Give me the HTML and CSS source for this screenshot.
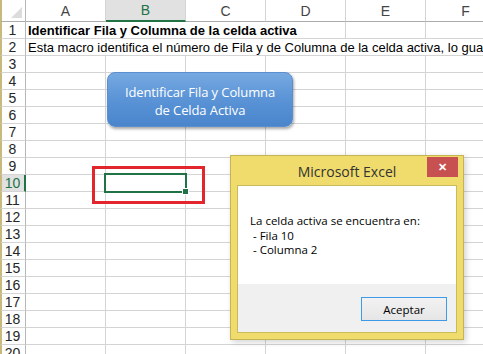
FILE: index.html
```html
<!DOCTYPE html>
<html lang="es">
<head>
  <meta charset="UTF-8">
  <title>Identificar Fila y Columna de la celda activa</title>
  <link rel="stylesheet" href="styles.css">
</head>
<body>
  <div class="app">
    <div class="sheet">
      <!-- cabecera de columnas -->
      <div class="corner"><span></span></div>
      <div class="col-head">A</div>
      <div class="col-head active">B</div>
      <div class="col-head">C</div>
      <div class="col-head">D</div>
      <div class="col-head">E</div>
      <div class="col-head">F</div>

      <div class="row-head">1</div>
      <div class="cell bold span4">Identificar Fila y Columna de la celda activa</div>
      <div class="cell"></div><div class="cell"></div>

      <div class="row-head">2</div>
      <div class="cell span6">Esta macro identifica el número de Fila y de Columna de la celda activa, lo guarda en variables y lo muestra</div>

      <div class="row-head">3</div>
      <div class="cell"></div><div class="cell"></div><div class="cell"></div><div class="cell"></div><div class="cell"></div><div class="cell"></div>
      <div class="row-head">4</div>
      <div class="cell"></div><div class="cell"></div><div class="cell"></div><div class="cell"></div><div class="cell"></div><div class="cell"></div>
      <div class="row-head">5</div>
      <div class="cell"></div><div class="cell"></div><div class="cell"></div><div class="cell"></div><div class="cell"></div><div class="cell"></div>
      <div class="row-head">6</div>
      <div class="cell"></div><div class="cell"></div><div class="cell"></div><div class="cell"></div><div class="cell"></div><div class="cell"></div>
      <div class="row-head">7</div>
      <div class="cell"></div><div class="cell"></div><div class="cell"></div><div class="cell"></div><div class="cell"></div><div class="cell"></div>
      <div class="row-head">8</div>
      <div class="cell"></div><div class="cell"></div><div class="cell"></div><div class="cell"></div><div class="cell"></div><div class="cell"></div>
      <div class="row-head">9</div>
      <div class="cell"></div><div class="cell"></div><div class="cell"></div><div class="cell"></div><div class="cell"></div><div class="cell"></div>
      <div class="row-head active">10</div>
      <div class="cell"></div><div class="cell"></div><div class="cell"></div><div class="cell"></div><div class="cell"></div><div class="cell"></div>
      <div class="row-head">11</div>
      <div class="cell"></div><div class="cell"></div><div class="cell"></div><div class="cell"></div><div class="cell"></div><div class="cell"></div>
      <div class="row-head">12</div>
      <div class="cell"></div><div class="cell"></div><div class="cell"></div><div class="cell"></div><div class="cell"></div><div class="cell"></div>
      <div class="row-head">13</div>
      <div class="cell"></div><div class="cell"></div><div class="cell"></div><div class="cell"></div><div class="cell"></div><div class="cell"></div>
      <div class="row-head">14</div>
      <div class="cell"></div><div class="cell"></div><div class="cell"></div><div class="cell"></div><div class="cell"></div><div class="cell"></div>
      <div class="row-head">15</div>
      <div class="cell"></div><div class="cell"></div><div class="cell"></div><div class="cell"></div><div class="cell"></div><div class="cell"></div>
      <div class="row-head">16</div>
      <div class="cell"></div><div class="cell"></div><div class="cell"></div><div class="cell"></div><div class="cell"></div><div class="cell"></div>
      <div class="row-head">17</div>
      <div class="cell"></div><div class="cell"></div><div class="cell"></div><div class="cell"></div><div class="cell"></div><div class="cell"></div>
      <div class="row-head">18</div>
      <div class="cell"></div><div class="cell"></div><div class="cell"></div><div class="cell"></div><div class="cell"></div><div class="cell"></div>
      <div class="row-head">19</div>
      <div class="cell"></div><div class="cell"></div><div class="cell"></div><div class="cell"></div><div class="cell"></div><div class="cell"></div>
      <div class="row-head">20</div>
      <div class="cell"></div><div class="cell"></div><div class="cell"></div><div class="cell"></div><div class="cell"></div><div class="cell"></div>
    </div>

    <!-- forma con la macro asignada -->
    <div class="macro-btn">Identificar Fila y Columna<br>de Celda Activa</div>

    <!-- celda activa B10 -->
    <div class="highlight"></div>
    <div class="selection"><span class="handle"></span></div>

    <div class="msgbox">
      <div class="msgbox-title">
        <span class="msgbox-caption">Microsoft Excel</span>
        <span class="msgbox-close">&#x2715;</span>
      </div>
      <div class="msgbox-client">
        <div class="msgbox-text">La celda activa se encuentra en:
 - Fila 10
 - Columna 2</div>
        <div class="msgbox-footer">
          <button class="msgbox-ok">Aceptar</button>
        </div>
      </div>
    </div>
  </div>
</body>
</html>
```

FILE: styles.css
```css
html, body {
  margin: 0;
  height: 100%;
  overflow: hidden;
  background: #fff;
}

.app {
  position: relative;
  width: 483px;
  height: 354px;
  overflow: hidden;
}

.sheet {
  display: grid;
  grid-template-columns: 26px repeat(6, 80px);
  grid-template-rows: 22px;
  grid-auto-rows: 17px;
  width: 506px;
  font-family: "Liberation Sans", Arial, sans-serif;
  font-size: 13px;
}

.sheet > div {
  box-sizing: border-box;
}

.corner {
  border-left: 2px solid #c8b97c;
  border-right: 1px solid #b8b8b8;
  border-bottom: 1px solid #ababab;
  display: flex;
  align-items: flex-end;
  justify-content: flex-end;
  padding: 0 3px 3px 0;
}

.corner span {
  width: 11px;
  height: 11px;
  background: #dcdcdc;
  clip-path: polygon(100% 0, 100% 100%, 0 100%);
}

.col-head {
  border-right: 1px solid #d4d4d4;
  border-bottom: 1px solid #ababab;
  color: #444;
  font-size: 14px;
  line-height: 22px;
  text-align: center;
}

.col-head.active {
  background: #e1e1e1;
  color: #217346;
  border-bottom: 2px solid #217346;
  line-height: 21px;
}

.row-head {
  border-left: 2px solid #c8b97c;
  border-right: 1px solid #b8b8b8;
  border-bottom: 1px solid #d4d4d4;
  color: #262626;
  font-size: 14px;
  line-height: 17px;
  text-align: center;
  padding-right: 2px;
}

.row-head.active {
  background: #e1e1e1;
  color: #217346;
  border-right: 2px solid #217346;
  padding-right: 1px;
}

.cell {
  border-right: 1px solid #d4d4d4;
  border-bottom: 1px solid #d4d4d4;
  color: #000;
  line-height: 17px;
  padding-left: 2px;
  white-space: nowrap;
  overflow: hidden;
}

.cell.bold {
  font-weight: bold;
}

.span4 {
  grid-column: span 4;
}

.span6 {
  grid-column: span 6;
}

/* forma azul */
.macro-btn {
  position: absolute;
  left: 107px;
  top: 72px;
  width: 186px;
  height: 55px;
  box-sizing: border-box;
  border-radius: 8px;
  border: 1px solid #5a8fcf;
  background: linear-gradient(#76a9e1, #5a93d6 50%, #4a85cc);
  box-shadow: 1px 2px 3px rgba(0, 0, 0, 0.35);
  color: #fff;
  font-family: "Open Sans", sans-serif;
  font-size: 13px;
  letter-spacing: -0.1px;
  line-height: 18px;
  text-align: center;
  padding-top: 10px;
}

.highlight {
  position: absolute;
  left: 92px;
  top: 166px;
  width: 113px;
  height: 38px;
  box-sizing: border-box;
  border: 3px solid #e3262e;
}

.selection {
  position: absolute;
  left: 104px;
  top: 173px;
  width: 83px;
  height: 20px;
  box-sizing: border-box;
  border: 2px solid #217346;
}

.handle {
  position: absolute;
  right: -4px;
  bottom: -4px;
  width: 5px;
  height: 5px;
  background: #217346;
  border: 1px solid #fff;
}

/* cuadro de mensaje */
.msgbox {
  position: absolute;
  left: 230px;
  top: 155px;
  width: 234px;
  height: 185px;
  box-sizing: border-box;
  background: #efdc6c;
  border: 1px solid #c4b452;
  box-shadow: 2px 2px 6px rgba(0, 0, 0, 0.18);
  padding: 0 6px 6px;
  display: flex;
  flex-direction: column;
  font-family: "Open Sans", sans-serif;
}

.msgbox-title {
  height: 29px;
  display: flex;
  align-items: flex-start;
  justify-content: flex-end;
}

.msgbox-caption {
  flex: 1;
  text-align: center;
  font-size: 14px;
  line-height: 31px;
  color: #333;
  padding-left: 30px;
}

.msgbox-close {
  width: 31px;
  height: 20px;
  margin-top: 1px;
  margin-right: -1px;
  background: #c75050;
  color: #fff;
  font-size: 11px;
  font-weight: bold;
  line-height: 20px;
  text-align: center;
}

.msgbox-client {
  flex: 1;
  border: 1px solid #c9ba5c;
  background: #fff;
  display: flex;
  flex-direction: column;
}

.msgbox-text {
  flex: 1;
  white-space: pre;
  font-size: 11.5px;
  line-height: 14.5px;
  color: #000;
  padding: 28px 0 0 12px;
}

.msgbox-footer {
  height: 48px;
  background: #f0f0f0;
  display: flex;
  justify-content: flex-end;
  align-items: flex-start;
}

.msgbox-ok {
  margin: 13px 9px 0 0;
  width: 86px;
  height: 24px;
  box-sizing: border-box;
  border: 1px solid #3c9ae8;
  background: linear-gradient(#f2f2f2, #e6e6e6);
  font-family: "Open Sans", sans-serif;
  font-size: 11.5px;
  color: #000;
  padding: 0;
}
```
